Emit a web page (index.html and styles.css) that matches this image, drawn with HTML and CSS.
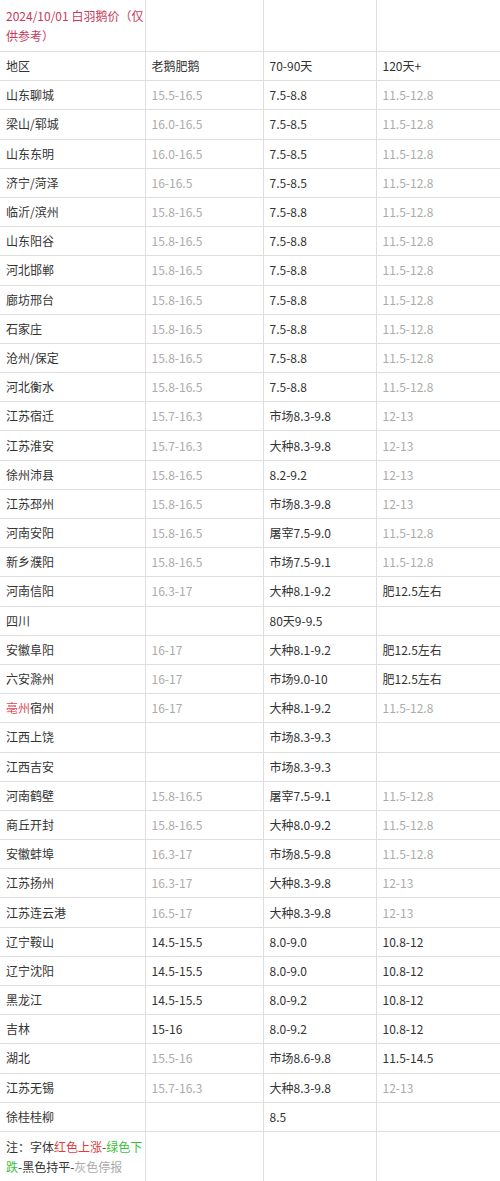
FILE: index.html
```html
<!DOCTYPE html>
<html lang="zh">
<head>
<meta charset="utf-8">
<link rel="stylesheet" href="styles.css">
</head>
<body>
<table class="price">
<colgroup><col class="c1"><col class="c2"><col class="c3"><col class="c4"></colgroup>
<tr class="title"><td class="red">2024/10/01 白羽鹅价（仅<br>供参考）</td><td></td><td></td><td></td></tr>
<tr><td>地区</td><td>老鹅肥鹅</td><td>70-90天</td><td>120天+</td></tr>
<tr><td>山东聊城</td><td class="g">15.5-16.5</td><td>7.5-8.8</td><td class="g">11.5-12.8</td></tr>
<tr><td>梁山/郓城</td><td class="g">16.0-16.5</td><td>7.5-8.5</td><td class="g">11.5-12.8</td></tr>
<tr><td>山东东明</td><td class="g">16.0-16.5</td><td>7.5-8.5</td><td class="g">11.5-12.8</td></tr>
<tr><td>济宁/菏泽</td><td class="g">16-16.5</td><td>7.5-8.5</td><td class="g">11.5-12.8</td></tr>
<tr><td>临沂/滨州</td><td class="g">15.8-16.5</td><td>7.5-8.8</td><td class="g">11.5-12.8</td></tr>
<tr><td>山东阳谷</td><td class="g">15.8-16.5</td><td>7.5-8.8</td><td class="g">11.5-12.8</td></tr>
<tr><td>河北邯郸</td><td class="g">15.8-16.5</td><td>7.5-8.8</td><td class="g">11.5-12.8</td></tr>
<tr><td>廊坊邢台</td><td class="g">15.8-16.5</td><td>7.5-8.8</td><td class="g">11.5-12.8</td></tr>
<tr><td>石家庄</td><td class="g">15.8-16.5</td><td>7.5-8.8</td><td class="g">11.5-12.8</td></tr>
<tr><td>沧州/保定</td><td class="g">15.8-16.5</td><td>7.5-8.8</td><td class="g">11.5-12.8</td></tr>
<tr><td>河北衡水</td><td class="g">15.8-16.5</td><td>7.5-8.8</td><td class="g">11.5-12.8</td></tr>
<tr><td>江苏宿迁</td><td class="g">15.7-16.3</td><td>市场8.3-9.8</td><td class="g">12-13</td></tr>
<tr><td>江苏淮安</td><td class="g">15.7-16.3</td><td>大种8.3-9.8</td><td class="g">12-13</td></tr>
<tr><td>徐州沛县</td><td class="g">15.8-16.5</td><td>8.2-9.2</td><td class="g">12-13</td></tr>
<tr><td>江苏邳州</td><td class="g">15.8-16.5</td><td>市场8.3-9.8</td><td class="g">12-13</td></tr>
<tr><td>河南安阳</td><td class="g">15.8-16.5</td><td>屠宰7.5-9.0</td><td class="g">11.5-12.8</td></tr>
<tr><td>新乡濮阳</td><td class="g">15.8-16.5</td><td>市场7.5-9.1</td><td class="g">11.5-12.8</td></tr>
<tr><td>河南信阳</td><td class="g">16.3-17</td><td>大种8.1-9.2</td><td>肥12.5左右</td></tr>
<tr><td>四川</td><td></td><td>80天9-9.5</td><td></td></tr>
<tr><td>安徽阜阳</td><td class="g">16-17</td><td>大种8.1-9.2</td><td>肥12.5左右</td></tr>
<tr><td>六安滁州</td><td class="g">16-17</td><td>市场9.0-10</td><td>肥12.5左右</td></tr>
<tr><td><span class="pink">亳州</span>宿州</td><td class="g">16-17</td><td>大种8.1-9.2</td><td class="g">11.5-12.8</td></tr>
<tr><td>江西上饶</td><td></td><td>市场8.3-9.3</td><td></td></tr>
<tr><td>江西吉安</td><td></td><td>市场8.3-9.3</td><td></td></tr>
<tr><td>河南鹤壁</td><td class="g">15.8-16.5</td><td>屠宰7.5-9.1</td><td class="g">11.5-12.8</td></tr>
<tr><td>商丘开封</td><td class="g">15.8-16.5</td><td>大种8.0-9.2</td><td class="g">11.5-12.8</td></tr>
<tr><td>安徽蚌埠</td><td class="g">16.3-17</td><td>市场8.5-9.8</td><td class="g">11.5-12.8</td></tr>
<tr><td>江苏扬州</td><td class="g">16.3-17</td><td>大种8.3-9.8</td><td class="g">12-13</td></tr>
<tr><td>江苏连云港</td><td class="g">16.5-17</td><td>大种8.3-9.8</td><td class="g">12-13</td></tr>
<tr><td>辽宁鞍山</td><td>14.5-15.5</td><td>8.0-9.0</td><td>10.8-12</td></tr>
<tr><td>辽宁沈阳</td><td>14.5-15.5</td><td>8.0-9.0</td><td>10.8-12</td></tr>
<tr><td>黑龙江</td><td>14.5-15.5</td><td>8.0-9.2</td><td>10.8-12</td></tr>
<tr><td>吉林</td><td>15-16</td><td>8.0-9.2</td><td>10.8-12</td></tr>
<tr><td>湖北</td><td class="g">15.5-16</td><td>市场8.6-9.8</td><td>11.5-14.5</td></tr>
<tr><td>江苏无锡</td><td class="g">15.7-16.3</td><td>大种8.3-9.8</td><td class="g">12-13</td></tr>
<tr><td>徐桂桂柳</td><td></td><td>8.5</td><td></td></tr>
<tr class="note"><td>注：字体<span class="up">红色上涨</span>-<span class="down">绿色下<br>跌</span>-黑色持平-<span class="g">灰色停报</span></td><td></td><td></td><td></td></tr>
</table>
</body>
</html>
```
FILE: styles.css
```css
html, body {
  margin: 0;
  padding: 0;
  background: #fff;
}
body {
  font-family: "Noto Sans CJK SC", "Noto Sans", sans-serif;
  font-size: 12px;
  color: #333;
}
.price {
  border-collapse: collapse;
  table-layout: fixed;
  width: 500px;
}
.c1 { width: 145px; }
.c2 { width: 118px; }
.c3 { width: 113px; }
.c4 { width: 124px; }
.price td {
  border: 1px solid #dedede;
  padding: 0 6px;
  height: 28.19px;
  line-height: 20px;
  vertical-align: middle;
  white-space: nowrap;
}
.price tr:first-child td { border-top: none; }
.price td:first-child { border-left: none; }
.price tr.title td { height: 51px; }
.price tr.note td { height: 51px; }
.red { color: #c93a5c; }
.g { color: #ababab; }
.pink { color: #dc4a5e; }
.up { color: #e23a3a; }
.down { color: #3cbf3c; }
```
